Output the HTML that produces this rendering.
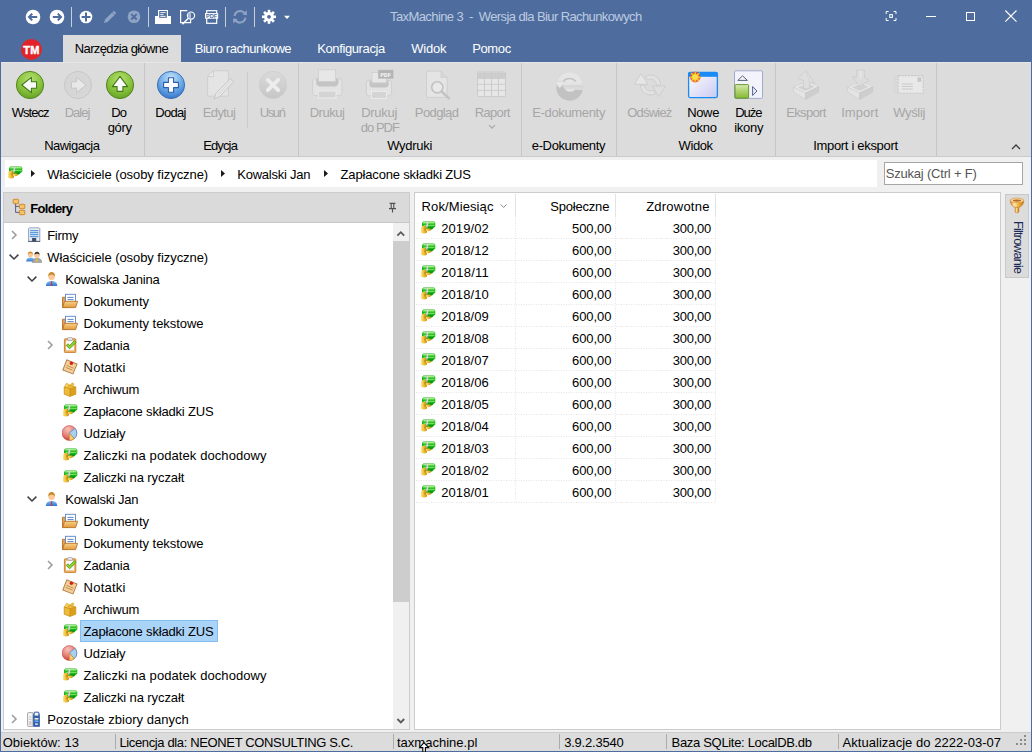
<!DOCTYPE html>
<html><head><meta charset="utf-8">
<style>
*{margin:0;padding:0;box-sizing:border-box}
html,body{width:1032px;height:752px;overflow:hidden}
body{position:relative;background:#f0f0f0;font-family:"Liberation Sans",sans-serif;font-size:13px;color:#1e1e1e}
.a{position:absolute}
.t{position:absolute;white-space:pre;line-height:15px;font-size:13px}
svg{position:absolute;overflow:visible}
</style></head><body>
<!-- frame -->
<div class="a" style="left:0;top:0;width:1032px;height:62px;background:#4e6d9e"></div>
<div class="a" style="left:0;top:0;width:1px;height:752px;background:#4e6d9e"></div>
<div class="a" style="left:1031px;top:0;width:1px;height:752px;background:#4e6d9e"></div>
<div class="a" style="left:0;top:751px;width:1032px;height:1px;background:#4e6d9e"></div>
<!-- active tab -->
<div class="a" style="left:63px;top:35px;width:118px;height:27px;background:#dcdcdc"></div>
<!-- ribbon -->
<div class="a" style="left:1px;top:62px;width:1030px;height:95px;background:#dcdcdc;border-top:1px solid #e6e6e6;border-bottom:1px solid #cacaca"></div>
<div class="a" style="left:144px;top:63px;width:1px;height:93px;background:#c6c6c6"></div>
<div class="a" style="left:298px;top:63px;width:1px;height:93px;background:#c6c6c6"></div>
<div class="a" style="left:521px;top:63px;width:1px;height:93px;background:#c6c6c6"></div>
<div class="a" style="left:616px;top:63px;width:1px;height:93px;background:#c6c6c6"></div>
<div class="a" style="left:775px;top:63px;width:1px;height:93px;background:#c6c6c6"></div>
<div class="a" style="left:936px;top:63px;width:1px;height:93px;background:#c6c6c6"></div>
<div class="a" style="left:247px;top:72px;width:1px;height:56px;background:#cbcbcb"></div>
<!-- breadcrumb -->
<div class="a" style="left:5px;top:160px;width:872px;height:27px;background:#fff"></div>
<div class="a" style="left:884px;top:162px;width:139px;height:23px;background:#fff;border:1px solid #a6a6a6"></div>
<!-- left panel -->
<div class="a" style="left:3px;top:192px;width:407px;height:538px;background:#fff;border:1px solid #cccccc"></div>
<div class="a" style="left:4px;top:193px;width:405px;height:30px;background:#dadada;border-bottom:1px solid #c8c8c8"></div>
<div class="a" style="left:393px;top:223px;width:16px;height:506px;background:#f0f0f0"></div>
<div class="a" style="left:393px;top:241px;width:16px;height:361px;background:#cdcdcd"></div>
<div class="a" style="left:80px;top:620px;width:138px;height:22px;background:#aad3f8;border:1px solid #84bef0"></div>
<!-- right panel -->
<div class="a" style="left:414px;top:192px;width:587px;height:538px;background:#fff;border:1px solid #cccccc"></div>
<div class="a" style="left:1005px;top:194px;width:24px;height:84px;background:#dcdcdc;border:1px solid #c8c8c8"></div>
<!-- status bar -->
<div class="a" style="left:1px;top:732px;width:1030px;height:19px;background:#dcdcdc;border-top:1px solid #cbcbcb"></div>
<div class="a" style="left:115px;top:734px;width:1px;height:15px;background:#ababab"></div>
<div class="a" style="left:393px;top:734px;width:1px;height:15px;background:#ababab"></div>
<div class="a" style="left:559px;top:734px;width:1px;height:15px;background:#ababab"></div>
<div class="a" style="left:666px;top:734px;width:1px;height:15px;background:#ababab"></div>
<div class="a" style="left:838px;top:734px;width:1px;height:15px;background:#ababab"></div>
<svg width="0" height="0" style="position:absolute;left:0;top:0">
<defs>
<linearGradient id="fold" x1="0" y1="0" x2="0" y2="1"><stop offset="0" stop-color="#f7d28a"/><stop offset="1" stop-color="#e39a3a"/></linearGradient>
<linearGradient id="gold" x1="0" y1="0" x2="0" y2="1"><stop offset="0" stop-color="#ffe070"/><stop offset="1" stop-color="#d49a10"/></linearGradient>
<linearGradient id="bill" x1="0" y1="0" x2="0" y2="1"><stop offset="0" stop-color="#b8f58a"/><stop offset="1" stop-color="#1fae1f"/></linearGradient>
<linearGradient id="suit" x1="0" y1="0" x2="0" y2="1"><stop offset="0" stop-color="#7fc0f5"/><stop offset="1" stop-color="#2a78d0"/></linearGradient>
<radialGradient id="pieg" cx="0.4" cy="0.25" r="0.8"><stop offset="0" stop-color="#f6c4bc"/><stop offset="0.6" stop-color="#e27a70"/><stop offset="1" stop-color="#c83030"/></radialGradient>
<symbol id="money" viewBox="0 0 16 16">
<linearGradient id="coin" x1="0" y1="0" x2="1" y2="0"><stop offset="0" stop-color="#fbe47c"/><stop offset="0.6" stop-color="#eab52a"/><stop offset="1" stop-color="#c88a0c"/></linearGradient>
<path d="M3.4 1.6H14.2L15.3 3V6.4L12 9.4H7L2 6.8V3Z" fill="#1fb31f"/>
<path d="M3.6 2H14.2L14.8 3.6H2.6Z" fill="#9cf27c"/>
<path d="M3.8 4.8H14.6V6H3.4Z" fill="#70e058"/>
<path d="M7.2 7.2H13.6L12 9.2H7.2Z" fill="#0b960f"/>
<path d="M7 1.9H8.5L7.5 7.4H6Z" fill="#eccaf2"/>
<rect x="1.1" y="6" width="5.4" height="7" rx="1.8" fill="url(#coin)"/>
<ellipse cx="4" cy="11.8" rx="3" ry="1.7" fill="url(#coin)"/>
<ellipse cx="8.4" cy="9.8" rx="2.6" ry="1.4" fill="url(#coin)"/>
<path d="M5 8.2V10.4" stroke="#a86c08" stroke-width="0.8"/>
</symbol>
<symbol id="docfold" viewBox="0 -0.8 16 16">
<path d="M0.5 3.5H3.5L4.5 4.5H6V13.6H0.5Z" fill="#e6a24a" stroke="#b8732a" stroke-width="0.9"/>
<rect x="3.5" y="0.5" width="10" height="8.5" fill="#fff" stroke="#5c86c8" stroke-width="0.9"/>
<path d="M5.5 3.6H11.6M5.5 5.8H11.6" stroke="#5c86c8" stroke-width="1"/>
<path d="M2.5 7.5H15.6L13.6 13.8H0.6Z" fill="url(#fold)" stroke="#b8732a" stroke-width="0.9"/>
</symbol>
<symbol id="clip" viewBox="0 0 16 16">
<rect x="2.4" y="1.8" width="11.4" height="13.8" rx="0.8" fill="#f0b060" stroke="#c87a2a" stroke-width="0.9"/>
<rect x="3.8" y="3.2" width="8.6" height="10.6" fill="#fafafa" stroke="#e0a050" stroke-width="0.5"/>
<rect x="5.6" y="0.6" width="5" height="2.8" rx="1" fill="#e8e8f0" stroke="#8c8c9c" stroke-width="0.6"/>
<path d="M4.2 8.4L6.2 6.8L7.6 8.6L12.4 3.6L14.2 5.4L7.6 11.8Z" fill="#92d22c" stroke="#3f8a14" stroke-width="0.7" stroke-linejoin="round"/>
</symbol>
<symbol id="note" viewBox="0 0 16 16">
<g transform="rotate(22 8 8)"><rect x="2.4" y="2.6" width="11" height="10.8" fill="#f2d098" stroke="#b07840" stroke-width="0.9"/>
<path d="M4.2 7.8H11.6M4.2 10H11.6" stroke="#c08850" stroke-width="0.9"/></g>
<circle cx="9.4" cy="4.2" r="1.7" fill="#d81c1c"/>
</symbol>
<symbol id="box" viewBox="0 0 16 16">
<path d="M2.2 6L8 4.2L13.8 6V13.2L8 15.4L2.2 13.2Z" fill="#eebb38" stroke="#c48a14" stroke-width="0.7"/>
<path d="M8 7.8L13.8 6V13.2L8 15.4Z" fill="#d9a020"/>
<path d="M2.2 6L8 7.8L13.8 6M8 7.8V15.4" stroke="#c08810" stroke-width="0.6" fill="none"/>
<path d="M2.6 5.8L4.4 2.2L7.4 3.6L5.4 6.8Z" fill="#f6d060" stroke="#c9940f" stroke-width="0.5"/>
<path d="M8.2 4.2L10.2 1.8L12.2 3L10.4 5.2Z" fill="#f0c448" stroke="#c9940f" stroke-width="0.5"/>
</symbol>
<symbol id="pie" viewBox="0.6 0 16 16">
<circle cx="8" cy="8" r="7.4" fill="url(#pieg)" stroke="#c84848" stroke-width="0.6"/>
<path d="M8 8L13.67 3.24A7.4 7.4 0 0 1 12.76 13.67Z" fill="#a6d2f0" stroke="#4a7ec8" stroke-width="0.6"/>
<path d="M8 8L12.76 13.67A7.4 7.4 0 0 1 8 15.4Z" fill="#f6cf70" stroke="#c88a30" stroke-width="0.6"/>
</symbol>
<symbol id="person" viewBox="0 0 16 16">
<path d="M2 15C2 11.4 4.2 10 7.6 10C11 10 13.2 11.4 13.2 15Z" fill="url(#suit)"/>
<path d="M7.1 10.2H8.1L8.4 14.2L7.6 15L6.8 14.2Z" fill="#e03030"/>
<circle cx="7.6" cy="5.8" r="3.3" fill="#f8c898"/>
<path d="M4.2 5.6C4 2.6 5.6 1 7.6 1C9.8 1 11.2 2.6 11 5.6C10.4 4.2 9.2 3.8 7.6 3.8C6 3.8 4.8 4.2 4.2 5.6Z" fill="#c98a2a"/>
</symbol>
<symbol id="people" viewBox="0 0 16 12">
<path d="M0.2 10.6C0.2 7.6 2 6.6 4.4 6.6C6.8 6.6 8.6 7.6 8.6 10.6Z" fill="url(#suit)"/>
<circle cx="4.4" cy="3.6" r="2.6" fill="#f8c898"/>
<path d="M1.8 3.4C1.8 1.2 3 0.4 4.4 0.4C5.8 0.4 7 1.2 7 3.4C6.4 2.4 5.4 2.2 4.4 2.2C3.4 2.2 2.4 2.4 1.8 3.4Z" fill="#d68c26"/>
<path d="M6.4 11.6C6.4 8.4 8.4 7.2 11 7.2C13.6 7.2 15.6 8.4 15.6 11.6Z" fill="#a8a8a8" stroke="#7a7a7a" stroke-width="0.5"/>
<path d="M10.5 7.4H11.5L11.7 10.6L11 11.2L10.3 10.6Z" fill="#f0c020"/>
<circle cx="11" cy="4.2" r="2.6" fill="#f8c898"/>
<path d="M8.4 4C8.4 1.6 9.6 0.8 11 0.8C12.4 0.8 13.6 1.6 13.6 4C13 3 12 2.7 11 2.7C10 2.7 9 3 8.4 4Z" fill="#303030"/>
</symbol>
<symbol id="building" viewBox="0 0 13 15">
<rect x="0.5" y="0.4" width="11.4" height="14.2" fill="#e8eef6"/>
<path d="M0.6 1.2V14.6M11.8 1.2V14.6" stroke="#959cb6" stroke-width="1"/>
<path d="M1.2 0.8H11.2" stroke="#b4bccb" stroke-width="1.4"/>
<path d="M2 3.6H10.4M2 5.6H10.4M2 7.6H10.4M2 9.6H10.4" stroke="#5b9be2" stroke-width="1.1"/>
<rect x="4.1" y="11" width="4.1" height="3.6" fill="#3e4c66"/>
<path d="M0.2 14.4H12.2" stroke="#48536c" stroke-width="1"/>
</symbol>
<symbol id="storage" viewBox="0 0 13 16">
<rect x="0.6" y="1.6" width="5.4" height="13.8" rx="0.8" fill="#f4f4f4" stroke="#9a9a9a" stroke-width="0.9"/>
<path d="M2 6H4.6M2 8.4H4.6" stroke="#bdbdbd" stroke-width="0.8"/><path d="M2 11H4.6M2 13H4.6" stroke="#b88a8a" stroke-width="0.8"/>
<path d="M6.4 15.4V4L7.4 1H11.6L12.6 4V15.4Z" fill="#2f5fb0" stroke="#244c94" stroke-width="0.6"/>
<rect x="7.6" y="1.6" width="3.8" height="3" fill="#f0f0f0"/>
<rect x="7.6" y="7" width="3.8" height="1.6" fill="#f4ecd8"/>
<rect x="7.6" y="9.4" width="3.8" height="1.6" fill="#6ab0ec"/>
<rect x="8.2" y="12.4" width="2.6" height="1.4" fill="#f4f4f4"/>
</symbol>
</defs></svg><svg style="left:0;top:0" width="1032" height="35" viewBox="0 0 1032 35">
<!-- back -->
<circle cx="33" cy="17" r="7.3" fill="#fff"/>
<path d="M29.2 17H37.2M32.2 13.6L29 17L32.2 20.4" stroke="#4e6d9e" stroke-width="2.1" fill="none" stroke-linejoin="miter"/>
<!-- fwd -->
<circle cx="57" cy="17" r="7.3" fill="#fff"/>
<path d="M52.8 17H60.8M57.8 13.6L61 17L57.8 20.4" stroke="#4e6d9e" stroke-width="2.1" fill="none"/>
<rect x="71" y="7" width="1" height="20" fill="#c9cfd8"/>
<!-- plus -->
<circle cx="86" cy="17" r="6.3" fill="#fff"/>
<path d="M86 12.6V21.4M81.6 17H90.4" stroke="#4e6d9e" stroke-width="2" fill="none"/>
<!-- pencil dim -->
<path d="M104 23L105 19.5L113.8 10.7L116.3 13.2L107.5 22Z" fill="#8fa3c4"/>
<path d="M112.2 12.3L114.7 14.8" stroke="#4e6d9e" stroke-width="0.8"/>
<!-- x circle dim -->
<circle cx="134" cy="16.8" r="6.3" fill="#8fa3c4"/>
<path d="M131.3 14.1L136.7 19.5M136.7 14.1L131.3 19.5" stroke="#4e6d9e" stroke-width="1.8"/>
<rect x="148" y="7" width="1" height="20" fill="#c9cfd8"/>
<!-- printer -->
<rect x="155" y="16" width="16" height="8" fill="#fff"/>
<rect x="158" y="10" width="10" height="7" fill="#fff"/>
<rect x="159.2" y="11" width="7.6" height="6.8" fill="#4e6d9e"/>
<path d="M160.3 12.6H165.6M160.3 14.6H163.5M160.3 16.4H165.6" stroke="#fff" stroke-width="0.9"/>
<!-- preview -->
<path d="M187.4 10.6H180.6V22.6H190.6V19.6" stroke="#fff" stroke-width="1.2" fill="none"/>
<circle cx="191" cy="15.6" r="3.6" stroke="#fff" stroke-width="1.2" fill="#4e6d9e"/>
<path d="M191 12.6A3 3 0 0 0 191 18.6Z" fill="#aebcd4"/>
<path d="M188.4 18.3L182.4 24.3" stroke="#fff" stroke-width="1.5"/>
<!-- pdf -->
<rect x="206.7" y="10.7" width="10" height="12.6" stroke="#fff" stroke-width="1.2" fill="none"/>
<rect x="205" y="13.1" width="13.2" height="5.6" fill="#fff"/>
<text x="211.6" y="17.9" font-family="Liberation Sans" font-weight="bold" font-size="5.6" fill="#4e6d9e" text-anchor="middle">PDF</text>
<rect x="225" y="7" width="1" height="20" fill="#c9cfd8"/>
<!-- refresh dim -->
<path d="M234.6 16A5.6 5.6 0 0 1 244.6 13.2M245.4 17.6A5.6 5.6 0 0 1 235.4 20.4" stroke="#8fa3c4" stroke-width="2" fill="none"/>
<path d="M242.4 14.6L247 15.2L246.6 10.2Z M237.6 19L233 18.4L233.4 23.4Z" fill="#8fa3c4"/>
<rect x="254" y="7" width="1" height="20" fill="#c9cfd8"/>
<!-- gear -->
<g transform="translate(269 16.8)" fill="#fff">
<circle r="4.9"/>
<g id="gt"><rect x="-1.3" y="-7" width="2.6" height="3"/></g>
<use href="#gt" transform="rotate(45)"/><use href="#gt" transform="rotate(90)"/><use href="#gt" transform="rotate(135)"/>
<use href="#gt" transform="rotate(180)"/><use href="#gt" transform="rotate(225)"/><use href="#gt" transform="rotate(270)"/><use href="#gt" transform="rotate(315)"/>
<circle r="1.9" fill="#4e6d9e"/>
</g>
<path d="M284 15.8H290L287 19Z" fill="#fff"/>
<!-- window controls -->
<path d="M886.2 14V11.5H888.6M893.6 11.5H896V14M896 18V20.5H893.6M888.6 20.5H886.2V18" stroke="#fff" stroke-width="1" fill="none"/>
<rect x="889.8" y="14.6" width="2.6" height="2.8" stroke="#fff" stroke-width="1" fill="none"/>
<rect x="926" y="16" width="10" height="1" fill="#fff"/>
<rect x="966.5" y="12.5" width="8" height="8" stroke="#fff" stroke-width="1" fill="none"/>
<path d="M1005.3 10.5L1016.5 21.7M1016.5 10.5L1005.3 21.7" stroke="#fff" stroke-width="1.1"/>
<!-- TM logo -->
<circle cx="31.4" cy="49.4" r="10.5" fill="#e2242a"/>
<text x="31.6" y="53.8" font-family="Liberation Sans" font-weight="bold" font-size="11" fill="#fff" stroke="#fff" stroke-width="0.45" text-anchor="middle" letter-spacing="0.4">TM</text>
</svg><svg style="left:0;top:62" width="1032" height="40" viewBox="0 62 1032 40">
<defs>
<radialGradient id="gg" cx="0.5" cy="0.3" r="0.75"><stop offset="0" stop-color="#b4e070"/><stop offset="0.6" stop-color="#86c03a"/><stop offset="1" stop-color="#5f9a24"/></radialGradient>
<radialGradient id="bg" cx="0.5" cy="0.25" r="0.8"><stop offset="0" stop-color="#c4e2fa"/><stop offset="0.55" stop-color="#6aa8e6"/><stop offset="1" stop-color="#2f6fc4"/></radialGradient>
<linearGradient id="gr" x1="0" y1="0" x2="0" y2="1"><stop offset="0" stop-color="#dadada"/><stop offset="1" stop-color="#c6c6c6"/></linearGradient>
<linearGradient id="win" x1="0" y1="0" x2="1" y2="1"><stop offset="0" stop-color="#ffffff"/><stop offset="1" stop-color="#c9c9f2"/></linearGradient>
<radialGradient id="sun"><stop offset="0" stop-color="#fff27a"/><stop offset="0.5" stop-color="#f7a21b"/><stop offset="1" stop-color="#e0301e"/></radialGradient>
</defs>
<!-- Wstecz -->
<circle cx="30" cy="85" r="13.6" fill="url(#gg)" stroke="#4f8a22" stroke-width="1"/>
<path d="M21.8 85L31.4 77.4V81.8H36.6V88.2H31.4V92.6Z" fill="#fafafa" stroke="#3f7a1a" stroke-width="1.1" stroke-linejoin="round"/>
<!-- Dalej -->
<circle cx="78" cy="85" r="13.6" fill="#d6d6d6" stroke="#c8c8c8" stroke-width="1"/>
<path d="M86.2 85L76.6 77.4V81.8H71.4V88.2H76.6V92.6Z" fill="#e8e8e8" stroke="#c6c6c6" stroke-width="1" stroke-linejoin="round"/>
<!-- Do gory -->
<circle cx="120" cy="85" r="13.6" fill="url(#gg)" stroke="#4f8a22" stroke-width="1"/>
<path d="M120 76.4L127.6 86.6H122.9V91.4H117.1V86.6H112.4Z" fill="#fafafa" stroke="#3f7a1a" stroke-width="1.1" stroke-linejoin="round"/>
<!-- Dodaj -->
<circle cx="171" cy="85" r="13.6" fill="url(#bg)" stroke="#3169b5" stroke-width="0.9"/>
<path d="M168.4 77.8H173.6V82.4H178.4V87.6H173.6V92.2H168.4V87.6H163.6V82.4H168.4Z" fill="#fbfbff" stroke="#2a5ea8" stroke-width="1.1" stroke-linejoin="round"/>
<!-- Edytuj -->
<path d="M207.6 76.6L213.4 70.8H228.4V96.2H207.6Z" fill="#e4e4e4" stroke="#cdcdcd" stroke-width="0.9"/>
<path d="M207.6 76.6H213.4V70.8Z" fill="#ececec" stroke="#cdcdcd" stroke-width="0.9" stroke-linejoin="round"/>
<path d="M214 98.8L216 93.2L230.4 78.5L233.8 81.6L219.6 96.6Z" fill="#e6e6e6" stroke="#c4c4c4" stroke-width="0.9" stroke-linejoin="round"/>
<path d="M217.8 94.9L232 80" stroke="#d2d2d2" stroke-width="0.8"/>
<!-- Usun -->
<circle cx="273" cy="85" r="13.6" fill="url(#gr)" stroke="#cbcbcb" stroke-width="0.8"/>
<path d="M267.8 79.8L278.2 90.2M278.2 79.8L267.8 90.2" stroke="#ededed" stroke-width="3.8" stroke-linecap="round"/>
<!-- Drukuj -->
<rect x="312.6" y="78.6" width="29.4" height="17" rx="2.6" fill="#e3e3e3" stroke="#cbcbcb" stroke-width="0.8"/>
<path d="M316.2 78.8H338.4V82.6Q338.4 86.4 334.8 86.4H319.8Q316.2 86.4 316.2 82.6Z" fill="#c4c4c4"/>
<rect x="318.6" y="69.8" width="17" height="11.6" fill="#e7e7e7" stroke="#cfcfcf" stroke-width="0.8"/>
<rect x="318.2" y="91" width="17.8" height="7" fill="#d4d4d4" stroke="#ececec" stroke-width="1"/>
<!-- Drukuj do PDF -->
<rect x="366.4" y="80.2" width="25.2" height="15.6" rx="2.4" fill="#e3e3e3" stroke="#cbcbcb" stroke-width="0.8"/>
<path d="M369.4 80.4H388.6V84Q388.6 87.6 385.4 87.6H372.6Q369.4 87.6 369.4 84Z" fill="#c4c4c4"/>
<rect x="372" y="72.4" width="14.4" height="10.4" fill="#e7e7e7" stroke="#cfcfcf" stroke-width="0.8"/>
<rect x="371.4" y="91.4" width="15.2" height="7" fill="#d4d4d4" stroke="#ececec" stroke-width="1"/>
<rect x="378.2" y="70" width="15" height="8.6" fill="#b4b4b4" stroke="#c4c4c4" stroke-width="0.5"/>
<text x="385.7" y="76.7" font-family="Liberation Mono" font-weight="bold" font-size="6.2" fill="#f4f4f4" text-anchor="middle" style="text-rendering:geometricPrecision">PDF</text>
<!-- Podglad -->
<path d="M426.5 71.2H441L447.2 77.4V97.4H426.5Z" fill="#e4e4e4" stroke="#cdcdcd" stroke-width="0.9"/>
<path d="M441 71.2V77.4H447.2" fill="#d8d8d8" stroke="#cdcdcd" stroke-width="0.9"/>
<circle cx="437.3" cy="87.3" r="5.6" fill="#e9e9e9" stroke="#c2c2c2" stroke-width="1.6"/>
<path d="M441.4 91.4L449 98.4" stroke="#c2c2c2" stroke-width="2.4" stroke-linecap="round"/>
<!-- Raport -->
<rect x="477.5" y="72" width="28" height="24.5" rx="1" fill="#e6e6e6" stroke="#cbcbcb" stroke-width="1"/>
<rect x="478" y="72.5" width="27" height="5.8" fill="#cdcdcd"/>
<path d="M477.5 78.3H505.5M477.5 84.3H505.5M477.5 90.4H505.5M484.5 72V96.5M491.5 72V96.5M498.5 72V96.5" stroke="#cbcbcb" stroke-width="1"/>
<!-- E-dokumenty -->
<path d="M556.5 85.5A13 12.8 0 0 0 582.8 89.6H574.6A7 6.8 0 0 1 563 85.5Z" fill="#c2c2c2"/>
<path d="M556.5 85.5A13 13 0 0 1 582.8 84.8V88.5H564.6A6.5 6 0 0 0 576 88.5V89.6H582.8V84.8Z" fill="#e5e5e5" stroke="#d6d6d6" stroke-width="0.6"/>
<path d="M563 81.5A7.5 6.4 0 0 1 575.8 81.5" stroke="#c4c4c4" stroke-width="1.4" fill="none"/>
<path d="M555 81.2L565.2 81.8L559.6 88.2Z" fill="#e8e8e8" stroke="#d2d2d2" stroke-width="0.6"/>
<path d="M564.8 86.6H582.6" stroke="#d0d0d0" stroke-width="0.8"/>
<!-- Odswiez -->
<path d="M640.5 85A10 10 0 0 0 655.5 93.66L653.5 90.2A6 6 0 0 1 644.5 85Z" fill="#e2e2e2" stroke="#c9c9c9" stroke-width="0.8"/>
<path d="M641 73.6L647.7 84.3H634.3Z" fill="#e6e6e6" stroke="#c9c9c9" stroke-width="0.8"/>
<path d="M645.5 76.34A10 10 0 0 1 660.5 85H656.5A6 6 0 0 0 647.5 79.8Z" fill="#e2e2e2" stroke="#c9c9c9" stroke-width="0.8"/>
<path d="M652.2 86H665.6L658.8 96.6Z" fill="#dedede" stroke="#c9c9c9" stroke-width="0.8"/>
<!-- Nowe okno -->
<rect x="688.6" y="72.4" width="28.8" height="25.2" rx="1.5" fill="url(#win)" stroke="#1a8af5" stroke-width="1.3"/>
<rect x="688.6" y="72.4" width="28.8" height="4.4" fill="#1a8af5"/>
<circle cx="695.2" cy="77" r="5.4" fill="#f05030" opacity="0.85"/>
<path d="M695.2 70.4L696.2 74.6L700.2 72.2L697.8 76.2L702 77.2L697.8 78.2L700 82L696.2 79.6L695.2 83.6L694.2 79.6L690.4 82L692.6 78.2L688.4 77.2L692.6 76.2L690.2 72.2L694.2 74.6Z" fill="#f7d020"/>
<circle cx="695.2" cy="77" r="2.6" fill="#f8e050"/>
<!-- Duze ikony -->
<rect x="734.5" y="70.8" width="28" height="27.6" rx="1.2" fill="#f3f4fb" stroke="#a0aacb" stroke-width="1"/>
<path d="M737.8 80.4L742.6 75.8L747.4 80.4Z" fill="none" stroke="#5a6276" stroke-width="1"/>
<path d="M752.6 86.5L757 91L752.6 95.5Z" fill="#e8eaf6" stroke="#5a6592" stroke-width="1"/>
<defs><linearGradient id="grn" x1="0" y1="0" x2="0" y2="1"><stop offset="0" stop-color="#d8eab0"/><stop offset="0.45" stop-color="#b0d470"/><stop offset="1" stop-color="#86b836"/></linearGradient></defs>
<rect x="735" y="84.6" width="13.6" height="13.6" rx="0.8" fill="url(#grn)" stroke="#5f8e28" stroke-width="0.9"/>
<!-- Eksport -->
<path d="M793.4 87L807.6 81.6L818.8 86.6L805.6 93Z" fill="#e9e9e9" stroke="#d0d0d0" stroke-width="0.7"/>
<path d="M797.6 87.2L807.6 83.4L814.8 86.8L805.6 91Z" fill="#d2d2d2"/>
<path d="M793.4 87L805.6 93V99.6L793.6 92Z" fill="#e4e4e4" stroke="#d0d0d0" stroke-width="0.7"/>
<path d="M805.6 93L818.8 86.6V92L805.6 99.6Z" fill="#cecece" stroke="#c8c8c8" stroke-width="0.7"/>
<path d="M806 70.2L814.8 83.4L810 82L809 89L803.4 88.2L803.8 80.6L798.2 78.6Z" fill="#dedede" stroke="#cacaca" stroke-width="0.7"/>
<path d="M806 70.2L809.6 82.2L809 89" stroke="#d2d2d2" stroke-width="0.6" fill="none"/>
<!-- Import -->
<path d="M847.4 87L861.6 81.6L872.8 86.6L859.6 93Z" fill="#e9e9e9" stroke="#d0d0d0" stroke-width="0.7"/>
<path d="M851.6 87.2L861.6 83.4L868.8 86.8L859.6 91Z" fill="#d2d2d2"/>
<path d="M847.4 87L859.6 93V99.6L847.6 92Z" fill="#e4e4e4" stroke="#d0d0d0" stroke-width="0.7"/>
<path d="M859.6 93L872.8 86.6V92L859.6 99.6Z" fill="#cecece" stroke="#c8c8c8" stroke-width="0.7"/>
<path d="M856.4 70.2H864.8L864.4 77.6L869.3 80.4L859.4 86.5L852.4 76.4L856.6 77Z" fill="#dcdcdc" stroke="#c8c8c8" stroke-width="0.7"/>
<path d="M860.5 70.4V78.4" stroke="#e6e6e6" stroke-width="2"/>
<!-- Wyslij -->
<rect x="898.2" y="75.6" width="25" height="17.6" fill="#e8e8e8" stroke="#c8c8c8" stroke-width="1.1" stroke-dasharray="2.2 1"/>
<rect x="917.5" y="77.4" width="3.8" height="4.4" fill="#c6c6c6"/>
<path d="M901.5 84H912.8M901.5 86.5H912.8M901.5 89H912.8" stroke="#c8c8c8" stroke-width="0.9"/>
<path d="M893.6 77H897M893.6 79.5H897M893.6 82H897M893.6 84.5H897M893.6 87H897M893.6 89.5H897M893.6 92H897" stroke="#d0d0d0" stroke-width="0.8"/>
</svg><svg style="left:28px;top:227px" width="13" height="15" viewBox="0 0 13 15"><use href="#building"/></svg><svg style="left:9.5px;top:229px" width="8" height="12" viewBox="0 0 8 12"><path d="M2 2L6 6L2 10" stroke="#9a9a9a" stroke-width="1.5" fill="none"/></svg><svg style="left:26px;top:250.5px" width="16" height="12" viewBox="0 0 16 12"><use href="#people"/></svg><svg style="left:7.5px;top:253px" width="12" height="8" viewBox="0 0 12 8"><path d="M1.6 1.6L6 6L10.4 1.6" stroke="#404040" stroke-width="1.5" fill="none"/></svg><svg style="left:44px;top:271px" width="16" height="16" viewBox="0 0 16 16"><use href="#person"/></svg><svg style="left:25.5px;top:275px" width="12" height="8" viewBox="0 0 12 8"><path d="M1.6 1.6L6 6L10.4 1.6" stroke="#404040" stroke-width="1.5" fill="none"/></svg><svg style="left:62px;top:293px" width="16" height="16" viewBox="0 0 16 16"><use href="#docfold"/></svg><svg style="left:62px;top:315px" width="16" height="16" viewBox="0 0 16 16"><use href="#docfold"/></svg><svg style="left:62px;top:337px" width="16" height="16" viewBox="0 0 16 16"><use href="#clip"/></svg><svg style="left:45.5px;top:339px" width="8" height="12" viewBox="0 0 8 12"><path d="M2 2L6 6L2 10" stroke="#9a9a9a" stroke-width="1.5" fill="none"/></svg><svg style="left:62px;top:359px" width="16" height="16" viewBox="0 0 16 16"><use href="#note"/></svg><svg style="left:62px;top:381px" width="16" height="16" viewBox="0 0 16 16"><use href="#box"/></svg><svg style="left:62px;top:403px" width="16" height="16" viewBox="0 0 16 16"><use href="#money"/></svg><svg style="left:62px;top:425px" width="16" height="16" viewBox="0 0 16 16"><use href="#pie"/></svg><svg style="left:62px;top:447px" width="16" height="16" viewBox="0 0 16 16"><use href="#money"/></svg><svg style="left:62px;top:469px" width="16" height="16" viewBox="0 0 16 16"><use href="#money"/></svg><svg style="left:44px;top:491px" width="16" height="16" viewBox="0 0 16 16"><use href="#person"/></svg><svg style="left:25.5px;top:495px" width="12" height="8" viewBox="0 0 12 8"><path d="M1.6 1.6L6 6L10.4 1.6" stroke="#404040" stroke-width="1.5" fill="none"/></svg><svg style="left:62px;top:513px" width="16" height="16" viewBox="0 0 16 16"><use href="#docfold"/></svg><svg style="left:62px;top:535px" width="16" height="16" viewBox="0 0 16 16"><use href="#docfold"/></svg><svg style="left:62px;top:557px" width="16" height="16" viewBox="0 0 16 16"><use href="#clip"/></svg><svg style="left:45.5px;top:559px" width="8" height="12" viewBox="0 0 8 12"><path d="M2 2L6 6L2 10" stroke="#9a9a9a" stroke-width="1.5" fill="none"/></svg><svg style="left:62px;top:579px" width="16" height="16" viewBox="0 0 16 16"><use href="#note"/></svg><svg style="left:62px;top:601px" width="16" height="16" viewBox="0 0 16 16"><use href="#box"/></svg><svg style="left:62px;top:623px" width="16" height="16" viewBox="0 0 16 16"><use href="#money"/></svg><svg style="left:62px;top:645px" width="16" height="16" viewBox="0 0 16 16"><use href="#pie"/></svg><svg style="left:62px;top:667px" width="16" height="16" viewBox="0 0 16 16"><use href="#money"/></svg><svg style="left:62px;top:689px" width="16" height="16" viewBox="0 0 16 16"><use href="#money"/></svg><svg style="left:27px;top:711px" width="13" height="16" viewBox="0 0 13 16"><use href="#storage"/></svg><svg style="left:9.5px;top:713px" width="8" height="12" viewBox="0 0 8 12"><path d="M2 2L6 6L2 10" stroke="#9a9a9a" stroke-width="1.5" fill="none"/></svg><svg style="left:420px;top:220px" width="16" height="16" viewBox="0 0 16 16"><use href="#money"/></svg><svg style="left:420px;top:242px" width="16" height="16" viewBox="0 0 16 16"><use href="#money"/></svg><svg style="left:420px;top:264px" width="16" height="16" viewBox="0 0 16 16"><use href="#money"/></svg><svg style="left:420px;top:286px" width="16" height="16" viewBox="0 0 16 16"><use href="#money"/></svg><svg style="left:420px;top:308px" width="16" height="16" viewBox="0 0 16 16"><use href="#money"/></svg><svg style="left:420px;top:330px" width="16" height="16" viewBox="0 0 16 16"><use href="#money"/></svg><svg style="left:420px;top:352px" width="16" height="16" viewBox="0 0 16 16"><use href="#money"/></svg><svg style="left:420px;top:374px" width="16" height="16" viewBox="0 0 16 16"><use href="#money"/></svg><svg style="left:420px;top:396px" width="16" height="16" viewBox="0 0 16 16"><use href="#money"/></svg><svg style="left:420px;top:418px" width="16" height="16" viewBox="0 0 16 16"><use href="#money"/></svg><svg style="left:420px;top:440px" width="16" height="16" viewBox="0 0 16 16"><use href="#money"/></svg><svg style="left:420px;top:462px" width="16" height="16" viewBox="0 0 16 16"><use href="#money"/></svg><svg style="left:420px;top:484px" width="16" height="16" viewBox="0 0 16 16"><use href="#money"/></svg><svg style="left:0;top:0" width="1032" height="752" viewBox="0 0 1032 752">
<!-- raport chevron -->
<path d="M489 125.2L492 128.2L495 125.2" stroke="#a9a9a9" stroke-width="1.2" fill="none"/>
<!-- collapse chevron -->
<path d="M1012 149L1016 145L1020 149" stroke="#404040" stroke-width="1.4" fill="none"/>
<!-- breadcrumb triangles -->
<path d="M31 170V177L35 173.5Z M221 170V177L225 173.5Z M324 170V177L328 173.5Z" fill="#1a1a1a"/>
<!-- folder tree icon -->
<path d="M15.6 203.5V212.4H19.6M15.6 206.4H19.6" stroke="#5a5a8a" stroke-width="1" fill="none"/>
<rect x="13.2" y="199.3" width="5.4" height="4.4" rx="0.8" fill="#f5c46a" stroke="#d08a2a" stroke-width="1"/>
<rect x="19.4" y="204.3" width="5.4" height="4.4" rx="0.8" fill="#f5c46a" stroke="#d08a2a" stroke-width="1"/>
<rect x="19.4" y="210.3" width="5.4" height="4.4" rx="0.8" fill="#f5c46a" stroke="#d08a2a" stroke-width="1"/>
<!-- pin -->
<path d="M389.6 203.4H395.4M391.2 203.4V208.4M393.8 203.4V208.4M389 208.6H396M392.5 208.6V212.4" stroke="#4f4f4f" stroke-width="1.1" fill="none"/>
<!-- scrollbar arrows -->
<path d="M397.4 235.6L400.8 232.2L404.2 235.6" stroke="#5a5a5a" stroke-width="1.8" fill="none"/>
<path d="M397.4 719L400.8 722.4L404.2 719" stroke="#5a5a5a" stroke-width="1.8" fill="none"/>
<!-- grid header separators -->
<path d="M515.5 194V217M615.5 194V217M715.5 194V217" stroke="#e3e3e3" stroke-width="1"/>
<!-- dotted grid lines -->
<g stroke="#e4e4e4" stroke-width="1" stroke-dasharray="1 1.5">
<path d="M416 238.5H716M416 260.5H716M416 282.5H716M416 304.5H716M416 326.5H716M416 348.5H716M416 370.5H716M416 392.5H716M416 414.5H716M416 436.5H716M416 458.5H716M416 480.5H716M416 502.5H716"/>
<path d="M515.5 218V502M615.5 218V502M715.5 218V502"/>
</g>
<!-- sort chevron -->
<path d="M500.6 204.4L503.6 207.4L506.6 204.4" stroke="#8a8a8a" stroke-width="1" fill="none"/>
<!-- funnel -->
<defs><linearGradient id="fun" x1="0" y1="0" x2="1" y2="0"><stop offset="0" stop-color="#d88a2a"/><stop offset="0.3" stop-color="#fce8b8"/><stop offset="0.55" stop-color="#f2c040"/><stop offset="1" stop-color="#c8741a"/></linearGradient></defs>
<path d="M1015.1 205.6H1018.9V211.6Q1018.9 212.8 1017 212.8Q1015.1 212.8 1015.1 211.6Z" fill="url(#fun)" stroke="#c07020" stroke-width="0.5"/>
<path d="M1010.3 200.4Q1010.4 206.2 1015.4 207.4H1018.6Q1023.6 206.2 1023.7 200.4Z" fill="url(#fun)" stroke="#c47424" stroke-width="0.6"/>
<ellipse cx="1017" cy="200.4" rx="6.7" ry="2.3" fill="#f8dca8" stroke="#d08a30" stroke-width="0.6"/>
<ellipse cx="1017" cy="200.6" rx="4.2" ry="1.1" fill="#b86a20"/>
<!-- grip -->
<g fill="#8a8a8a"><rect x="1024" y="735" width="2" height="2"/><rect x="1020" y="739" width="2" height="2"/><rect x="1024" y="739" width="2" height="2"/>
<rect x="1016" y="743" width="2" height="2"/><rect x="1020" y="743" width="2" height="2"/><rect x="1024" y="743" width="2" height="2"/></g>
</svg><svg style="left:7px;top:165px" width="16" height="16" viewBox="0 0 16 16"><use href="#money"/></svg>
<div class="t" style="left:390.1px;top:8.9px;color:#bccbe0;letter-spacing:-0.604px">TaxMachine 3  -  Wersja dla Biur Rachunkowych</div>
<div class="t" style="left:74.8px;top:40.9px;color:#000000;letter-spacing:-0.630px">Narzędzia główne</div>
<div class="t" style="left:194.7px;top:40.9px;color:#ffffff;letter-spacing:-0.478px">Biuro rachunkowe</div>
<div class="t" style="left:317.2px;top:40.9px;color:#ffffff;letter-spacing:-0.380px">Konfiguracja</div>
<div class="t" style="left:411.2px;top:40.9px;color:#ffffff;letter-spacing:-0.231px">Widok</div>
<div class="t" style="left:472.2px;top:40.9px;color:#ffffff;letter-spacing:-0.367px">Pomoc</div>
<div class="t" style="left:11.8px;top:104.7px;color:#000000;letter-spacing:-1.005px">Wstecz</div>
<div class="t" style="left:64.7px;top:104.7px;color:#a6a6a6;letter-spacing:-0.981px">Dalej</div>
<div class="t" style="left:111.2px;top:104.7px;color:#000000;letter-spacing:-0.725px">Do</div>
<div class="t" style="left:107.7px;top:119.7px;color:#000000;letter-spacing:-0.366px">góry</div>
<div class="t" style="left:44.2px;top:137.7px;color:#000000;letter-spacing:-0.536px">Nawigacja</div>
<div class="t" style="left:155.2px;top:104.7px;color:#000000;letter-spacing:-0.692px">Dodaj</div>
<div class="t" style="left:202.7px;top:104.7px;color:#a6a6a6;letter-spacing:-0.588px">Edytuj</div>
<div class="t" style="left:259.7px;top:104.7px;color:#a6a6a6;letter-spacing:-1.386px">Usuń</div>
<div class="t" style="left:203.2px;top:137.7px;color:#000000;letter-spacing:-0.866px">Edycja</div>
<div class="t" style="left:309.7px;top:104.7px;color:#a6a6a6;letter-spacing:-0.456px">Drukuj</div>
<div class="t" style="left:361.2px;top:104.7px;color:#a6a6a6;letter-spacing:-0.276px">Drukuj</div>
<div class="t" style="left:360.8px;top:119.7px;color:#a6a6a6;letter-spacing:-0.996px">do PDF</div>
<div class="t" style="left:414.8px;top:104.7px;color:#a6a6a6;letter-spacing:-0.586px">Podgląd</div>
<div class="t" style="left:474.8px;top:104.7px;color:#a6a6a6;letter-spacing:-0.686px">Raport</div>
<div class="t" style="left:387.2px;top:137.7px;color:#000000;letter-spacing:-0.291px">Wydruki</div>
<div class="t" style="left:532.2px;top:104.7px;color:#a6a6a6;letter-spacing:-0.339px">E-dokumenty</div>
<div class="t" style="left:531.8px;top:137.7px;color:#000000;letter-spacing:-0.371px">e-Dokumenty</div>
<div class="t" style="left:627.2px;top:104.7px;color:#a6a6a6;letter-spacing:-0.777px">Odśwież</div>
<div class="t" style="left:687.2px;top:104.7px;color:#000000;letter-spacing:-0.350px">Nowe</div>
<div class="t" style="left:689.6px;top:119.7px;color:#000000;letter-spacing:-0.268px">okno</div>
<div class="t" style="left:735.2px;top:104.7px;color:#000000;letter-spacing:-1.053px">Duże</div>
<div class="t" style="left:734.2px;top:119.7px;color:#000000;letter-spacing:-0.290px">ikony</div>
<div class="t" style="left:678.6px;top:137.7px;color:#000000;letter-spacing:-0.406px">Widok</div>
<div class="t" style="left:786.2px;top:104.7px;color:#a6a6a6;letter-spacing:-0.646px">Eksport</div>
<div class="t" style="left:841.2px;top:104.7px;color:#a6a6a6;letter-spacing:0.071px">Import</div>
<div class="t" style="left:893.2px;top:104.7px;color:#a6a6a6;letter-spacing:-0.326px">Wyślij</div>
<div class="t" style="left:813.2px;top:137.7px;color:#000000;letter-spacing:-0.313px">Import i eksport</div>
<div class="t" style="left:47.2px;top:167.1px;color:#000000;letter-spacing:-0.057px">Właściciele (osoby fizyczne)</div>
<div class="t" style="left:237.2px;top:167.1px;color:#000000;letter-spacing:-0.225px">Kowalski Jan</div>
<div class="t" style="left:340.6px;top:167.1px;color:#000000;letter-spacing:-0.164px">Zapłacone składki ZUS</div>
<div class="t" style="left:885.7px;top:165.8px;color:#555555;letter-spacing:-0.198px">Szukaj (Ctrl + F)</div>
<div class="t" style="left:30.3px;top:200.7px;color:#000000;letter-spacing:-0.711px;font-weight:700">Foldery</div>
<div class="t" style="left:47.2px;top:228.2px;color:#000000;letter-spacing:-0.275px">Firmy</div>
<div class="t" style="left:47.2px;top:250.2px;color:#000000;letter-spacing:-0.057px">Właściciele (osoby fizyczne)</div>
<div class="t" style="left:65.2px;top:272.2px;color:#000000;letter-spacing:-0.212px">Kowalska Janina</div>
<div class="t" style="left:83.6px;top:294.2px;color:#000000;letter-spacing:-0.031px">Dokumenty</div>
<div class="t" style="left:83.6px;top:316.2px;color:#000000;letter-spacing:-0.040px">Dokumenty tekstowe</div>
<div class="t" style="left:83.6px;top:338.2px;color:#000000;letter-spacing:-0.147px">Zadania</div>
<div class="t" style="left:83.6px;top:360.2px;color:#000000;letter-spacing:0.239px">Notatki</div>
<div class="t" style="left:83.6px;top:382.2px;color:#000000;letter-spacing:-0.183px">Archiwum</div>
<div class="t" style="left:83.6px;top:404.2px;color:#000000;letter-spacing:-0.184px">Zapłacone składki ZUS</div>
<div class="t" style="left:83.6px;top:426.2px;color:#000000;letter-spacing:-0.121px">Udziały</div>
<div class="t" style="left:83.6px;top:448.2px;color:#000000;letter-spacing:0.083px">Zaliczki na podatek dochodowy</div>
<div class="t" style="left:83.6px;top:470.2px;color:#000000;letter-spacing:-0.104px">Zaliczki na ryczałt</div>
<div class="t" style="left:65.2px;top:492.2px;color:#000000;letter-spacing:-0.225px">Kowalski Jan</div>
<div class="t" style="left:83.6px;top:514.2px;color:#000000;letter-spacing:-0.031px">Dokumenty</div>
<div class="t" style="left:83.6px;top:536.2px;color:#000000;letter-spacing:-0.040px">Dokumenty tekstowe</div>
<div class="t" style="left:83.6px;top:558.2px;color:#000000;letter-spacing:-0.147px">Zadania</div>
<div class="t" style="left:83.6px;top:580.2px;color:#000000;letter-spacing:0.239px">Notatki</div>
<div class="t" style="left:83.6px;top:602.2px;color:#000000;letter-spacing:-0.183px">Archiwum</div>
<div class="t" style="left:83.6px;top:624.2px;color:#000000;letter-spacing:-0.184px">Zapłacone składki ZUS</div>
<div class="t" style="left:83.6px;top:646.2px;color:#000000;letter-spacing:-0.121px">Udziały</div>
<div class="t" style="left:83.6px;top:668.2px;color:#000000;letter-spacing:0.083px">Zaliczki na podatek dochodowy</div>
<div class="t" style="left:83.6px;top:690.2px;color:#000000;letter-spacing:-0.104px">Zaliczki na ryczałt</div>
<div class="t" style="left:47.2px;top:712.2px;color:#000000;letter-spacing:0.031px">Pozostałe zbiory danych</div>
<div class="t" style="left:421.6px;top:198.5px;color:#000000;letter-spacing:0.100px">Rok/Miesiąc</div>
<div class="t" style="left:550.2px;top:198.5px;color:#000000;letter-spacing:-0.190px">Społeczne</div>
<div class="t" style="left:646.2px;top:198.5px;color:#000000;letter-spacing:0.222px">Zdrowotne</div>
<div class="t" style="left:441.2px;top:221.3px;color:#000000;letter-spacing:0.100px">2019/02</div>
<div class="t" style="left:572.0px;top:221.3px;color:#000000;letter-spacing:-0.073px">500,00</div>
<div class="t" style="left:672.8px;top:221.3px;color:#000000;letter-spacing:-0.273px">300,00</div>
<div class="t" style="left:441.2px;top:243.3px;color:#000000;letter-spacing:0.100px">2018/12</div>
<div class="t" style="left:572.0px;top:243.3px;color:#000000;letter-spacing:-0.073px">600,00</div>
<div class="t" style="left:672.8px;top:243.3px;color:#000000;letter-spacing:-0.273px">300,00</div>
<div class="t" style="left:441.2px;top:265.3px;color:#000000;letter-spacing:0.261px">2018/11</div>
<div class="t" style="left:572.0px;top:265.3px;color:#000000;letter-spacing:-0.073px">600,00</div>
<div class="t" style="left:672.8px;top:265.3px;color:#000000;letter-spacing:-0.273px">300,00</div>
<div class="t" style="left:441.2px;top:287.3px;color:#000000;letter-spacing:0.100px">2018/10</div>
<div class="t" style="left:572.0px;top:287.3px;color:#000000;letter-spacing:-0.073px">600,00</div>
<div class="t" style="left:672.8px;top:287.3px;color:#000000;letter-spacing:-0.273px">300,00</div>
<div class="t" style="left:441.2px;top:309.3px;color:#000000;letter-spacing:0.100px">2018/09</div>
<div class="t" style="left:572.0px;top:309.3px;color:#000000;letter-spacing:-0.073px">600,00</div>
<div class="t" style="left:672.8px;top:309.3px;color:#000000;letter-spacing:-0.273px">300,00</div>
<div class="t" style="left:441.2px;top:331.3px;color:#000000;letter-spacing:0.100px">2018/08</div>
<div class="t" style="left:572.0px;top:331.3px;color:#000000;letter-spacing:-0.073px">600,00</div>
<div class="t" style="left:672.8px;top:331.3px;color:#000000;letter-spacing:-0.273px">300,00</div>
<div class="t" style="left:441.2px;top:353.3px;color:#000000;letter-spacing:0.100px">2018/07</div>
<div class="t" style="left:572.0px;top:353.3px;color:#000000;letter-spacing:-0.073px">600,00</div>
<div class="t" style="left:672.8px;top:353.3px;color:#000000;letter-spacing:-0.273px">300,00</div>
<div class="t" style="left:441.2px;top:375.3px;color:#000000;letter-spacing:0.100px">2018/06</div>
<div class="t" style="left:572.0px;top:375.3px;color:#000000;letter-spacing:-0.073px">600,00</div>
<div class="t" style="left:672.8px;top:375.3px;color:#000000;letter-spacing:-0.273px">300,00</div>
<div class="t" style="left:441.2px;top:397.3px;color:#000000;letter-spacing:0.100px">2018/05</div>
<div class="t" style="left:572.0px;top:397.3px;color:#000000;letter-spacing:-0.073px">600,00</div>
<div class="t" style="left:672.8px;top:397.3px;color:#000000;letter-spacing:-0.273px">300,00</div>
<div class="t" style="left:441.2px;top:419.3px;color:#000000;letter-spacing:0.100px">2018/04</div>
<div class="t" style="left:572.0px;top:419.3px;color:#000000;letter-spacing:-0.073px">600,00</div>
<div class="t" style="left:672.8px;top:419.3px;color:#000000;letter-spacing:-0.273px">300,00</div>
<div class="t" style="left:441.2px;top:441.3px;color:#000000;letter-spacing:0.100px">2018/03</div>
<div class="t" style="left:572.0px;top:441.3px;color:#000000;letter-spacing:-0.073px">600,00</div>
<div class="t" style="left:672.8px;top:441.3px;color:#000000;letter-spacing:-0.273px">300,00</div>
<div class="t" style="left:441.2px;top:463.3px;color:#000000;letter-spacing:0.100px">2018/02</div>
<div class="t" style="left:572.0px;top:463.3px;color:#000000;letter-spacing:-0.073px">600,00</div>
<div class="t" style="left:672.8px;top:463.3px;color:#000000;letter-spacing:-0.273px">300,00</div>
<div class="t" style="left:441.2px;top:485.3px;color:#000000;letter-spacing:0.100px">2018/01</div>
<div class="t" style="left:572.0px;top:485.3px;color:#000000;letter-spacing:-0.073px">600,00</div>
<div class="t" style="left:672.8px;top:485.3px;color:#000000;letter-spacing:-0.273px">300,00</div>
<div class="t" style="left:2.7px;top:734.8px;color:#000000;letter-spacing:0.030px">Obiektów: 13</div>
<div class="t" style="left:119.4px;top:734.8px;color:#000000;letter-spacing:-0.360px">Licencja dla: NEONET CONSULTING S.C.</div>
<div class="t" style="left:396.9px;top:734.8px;color:#000000;letter-spacing:0.023px">taxmachine.pl</div>
<div class="t" style="left:564.2px;top:734.8px;color:#000000;letter-spacing:-0.217px">3.9.2.3540</div>
<div class="t" style="left:671.6px;top:734.8px;color:#000000;letter-spacing:-0.319px">Baza SQLite: LocalDB.db</div>
<div class="t" style="left:842.5px;top:734.8px;color:#000000;letter-spacing:0.042px">Aktualizacje do 2222-03-07</div>
<div class="t" style="left:1013.5px;top:220.5px;font-size:12.5px;transform-origin:0 0;transform:rotate(90deg) translate(0,-11px);color:#1c2a58;letter-spacing:-0.74px">Filtrowanie</div>
<svg style="left:0;top:0" width="1032" height="752" viewBox="0 0 1032 752"><path d="M424 742.6L419.6 747.6H422.8V752H425.4V747.6H428.6Z" fill="#fff" stroke="#000" stroke-width="1.1"/></svg></body></html>
